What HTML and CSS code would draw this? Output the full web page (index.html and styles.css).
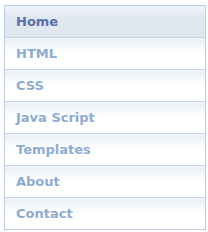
FILE: index.html
```html
<!DOCTYPE html>
<html lang="en">
<head>
<meta charset="UTF-8">
<title>Menu</title>
<link rel="stylesheet" href="styles.css">
</head>
<body>
  <ul class="menu">
    <li class="active"><a href="#">Home</a></li>
    <li><a href="#">HTML</a></li>
    <li><a href="#">CSS</a></li>
    <li><a href="#">Java Script</a></li>
    <li><a href="#">Templates</a></li>
    <li><a href="#">About</a></li>
    <li><a href="#">Contact</a></li>
  </ul>
</body>
</html>
```
FILE: styles.css
```css
body {
  margin: 0;
  padding: 5px 0 0 4px;
  background: #fff;
  font-family: "DejaVu Sans", Verdana, sans-serif;
}
.menu {
  list-style: none;
  margin: 0;
  padding: 0;
  width: 200px;
  border: 1px solid #bccde3;
}
.menu li {
  border-top: 1px solid #c3d2e5;
  background: linear-gradient(#f3f6fb 0, #ecf1f8 4px, #f6f9fc 9px, #fff 16px, #fff 100%);
}
.menu li:first-child {
  border-top: none;
}
.menu a {
  display: block;
  height: 30px;
  line-height: 30px;
  padding: 1px 0 0 11px;
  font-size: 13px;
  font-weight: bold;
  color: #8eabd4;
  text-decoration: none;
}
.menu li.active {
  background: linear-gradient(#f0f4fa 0, #e9eff7 5px, #dfe7f1 12px, #dfe7f1 100%);
}
.menu li.active a {
  color: #5b70ad;
}
```
